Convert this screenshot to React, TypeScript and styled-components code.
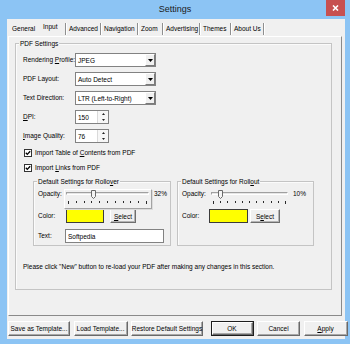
import React from "react";
import styled, { createGlobalStyle, css } from "styled-components";

const GlobalStyle = createGlobalStyle`
  html, body { margin: 0; padding: 0; background: #8cc3f2; }
  body { font-family: "Liberation Sans", Arial, sans-serif; color: #000; }
  * { box-sizing: border-box; }
`;

const Window = styled.div`
  width: 350px;
  height: 344px;
  background: #8cc4f4;
  display: flex;
  flex-direction: column;
  overflow: hidden;
`;

const TitleBar = styled.div`
  flex: none;
  height: 19px;
  display: grid;
  grid-template-columns: 1fr auto 1fr;
  align-items: start;
`;

const Title = styled.div`
  grid-column: 2;
  margin-top: 5px;
  font-size: 9px;
  line-height: 9px;
  color: #1b1b1b;
`;

const CloseButton = styled.div`
  grid-column: 3;
  justify-self: end;
  margin-right: 5px;
  width: 19px;
  height: 16px;
  background: #c75050;
  display: flex;
  align-items: center;
  justify-content: center;
`;

const Client = styled.div`
  flex: 1;
  margin: 0 5px 5px 7px;
  background: #f0f0f0;
  display: flex;
  flex-direction: column;
`;

const TabStrip = styled.div`
  flex: none;
  height: 17px;
  display: flex;
  align-items: flex-end;
  padding: 0 0 1px 2px;
`;

const Tab = styled.div<{ $w: number; $sep?: boolean; $active?: boolean }>`
  width: ${(p) => p.$w}px;
  height: 12px;
  padding-left: 3px;
  font-size: 6.5px;
  line-height: 12px;
  white-space: nowrap;
  ${(p) =>
    p.$sep &&
    css`
      border-right: 1px solid #8f8f8f;
      box-shadow: 1px 0 0 #ffffff;
    `}
  ${(p) =>
    p.$active &&
    css`
      line-height: 8px;
      padding-bottom: 4px;
    `}
`;

const TabPanel = styled.div`
  flex: none;
  margin-left: 1px;
  width: 334px;
  height: 280px;
  border: 1px solid;
  border-color: #ffffff #8a8a8a #8a8a8a #ffffff;
  padding: 6px 0 0 6px;
`;

const GroupBox = styled.div<{ $w: number; $h?: number }>`
  position: relative;
  width: ${(p) => p.$w}px;
  ${(p) => p.$h && css`height: ${p.$h}px;`}
  border: 1px solid #c4c4c4;
  box-shadow: inset 1px 1px 0 #fbfbfb;
`;

const GroupLabel = styled.span`
  position: absolute;
  top: -4px;
  left: 3px;
  padding: 0 1px;
  background: #f0f0f0;
  font-size: 6.5px;
  line-height: 8px;
  white-space: nowrap;
`;

const PdfBody = styled.div`
  display: flex;
  flex-direction: column;
  padding: 9px 0 0 7px;
`;

const FieldRow = styled.div`
  display: flex;
  align-items: center;
  height: 14px;
  & + & {
    margin-top: 5px;
  }
`;

const Text = styled.span<{ $w?: number }>`
  font-size: 6.5px;
  line-height: 8px;
  white-space: nowrap;
  ${(p) => p.$w !== undefined && css`width: ${p.$w}px; flex: none;`}
`;

const Key = styled.span`
  text-decoration: underline;
  text-underline-offset: 1px;
`;

const Field = styled.div<{ $w: number }>`
  width: ${(p) => p.$w}px;
  height: 14px;
  flex: none;
  background: #ffffff;
  border: 1px solid #828282;
  display: flex;
  align-items: center;
  padding-left: 2px;
  font-size: 6.5px;
`;

const DropButton = styled.div`
  margin-left: auto;
  width: 10px;
  height: 12px;
  background: #f0f0f0;
  border: 1px solid;
  border-color: #ffffff #7a7a7a #7a7a7a #ffffff;
  display: flex;
  align-items: center;
  justify-content: center;
`;

const SpinButtons = styled.div`
  margin-left: auto;
  width: 11px;
  height: 12px;
  display: flex;
  flex-direction: column;
  border-left: 1px solid #dadada;
`;

const SpinHalf = styled.div`
  flex: 1;
  display: flex;
  align-items: center;
  justify-content: center;
  background: #f7f7f7;
`;

const CheckRow = styled.div<{ $mt: number }>`
  display: flex;
  align-items: center;
  height: 10px;
  margin-top: ${(p) => p.$mt}px;
  padding-left: 1px;
  gap: 3px;
`;

const CheckBox = styled.div`
  width: 8px;
  height: 8px;
  flex: none;
  background: #ffffff;
  border: 1px solid #333333;
  display: flex;
  align-items: center;
  justify-content: center;
`;

const SubGroups = styled.div`
  display: flex;
  gap: 6px;
  margin: 8px 0 0 10px;
`;

const SubBody = styled.div`
  display: flex;
  flex-direction: column;
  padding: 7px 0 2px 4px;
`;

const SliderRow = styled.div`
  display: flex;
  align-items: flex-start;
  height: 20px;
`;

const SliderLabel = styled(Text)`
  padding-top: 1px;
`;

const SliderValue = styled(Text)`
  margin-left: 2px;
  padding-top: 1px;
`;

const Slider = styled.div<{ $w: number; $framed?: boolean }>`
  position: relative;
  width: ${(p) => p.$w}px;
  height: 20px;
  flex: none;
  border: 1px solid transparent;
  ${(p) =>
    p.$framed &&
    css`
      border-color: #ffffff #a3a3a3 #a3a3a3 #ffffff;
      box-shadow: 1px 1px 0 #dcdcdc;
    `}
`;

const Track = styled.div`
  margin: 2px 2px 0 1px;
  height: 3px;
  border: 1px solid;
  border-color: #a0a0a0 #ffffff #ffffff #a0a0a0;
  background: #e6e6e6;
`;

const Thumb = styled.svg`
  position: absolute;
  top: 0px;
`;

const Ticks = styled.div`
  display: flex;
  justify-content: space-between;
  align-items: flex-start;
  margin-top: 6px;
  padding: 0 4px 0 3px;
`;

const Tick = styled.div<{ $long?: boolean }>`
  width: 1px;
  height: ${(p) => (p.$long ? 3 : 2)}px;
  background: #2a2a2a;
`;

const ColorRow = styled.div`
  display: flex;
  align-items: center;
  height: 14px;
`;

const Swatch = styled.div<{ $w: number }>`
  width: ${(p) => p.$w}px;
  height: 14px;
  flex: none;
  background: #ffff00;
  border: 1px solid #3c3c3c;
`;

const SmallButton = styled.div<{ $w: number; $ml: number }>`
  width: ${(p) => p.$w}px;
  margin-left: ${(p) => p.$ml}px;
  height: 14px;
  flex: none;
  background: #f0f0f0;
  border: 1px solid;
  border-color: #ffffff #6e6e6e #6e6e6e #ffffff;
  box-shadow: inset -1px -1px 0 #b4b4b4;
  display: flex;
  align-items: center;
  justify-content: center;
  font-size: 6.5px;
`;

const TextRow = styled.div`
  display: flex;
  align-items: center;
  height: 14px;
  margin-top: 6px;
`;

const Note = styled(Text)`
  margin-top: 17px;
`;

const ButtonBar = styled.div`
  flex: none;
  display: flex;
  margin: 5px 0 0 1px;
`;

const ButtonGroup = styled.div<{ $ml?: number }>`
  display: flex;
  gap: 3.5px;
  margin-left: ${(p) => p.$ml ?? 0}px;
`;

const Button = styled.div<{ $w: number; $default?: boolean }>`
  width: ${(p) => p.$w}px;
  height: 15px;
  background: #f0f0f0;
  border: 1px solid;
  border-color: #ffffff #696969 #696969 #ffffff;
  box-shadow: inset -1px -1px 0 #a8a8a8;
  display: flex;
  align-items: center;
  justify-content: center;
  font-size: 6.5px;
  white-space: nowrap;
  ${(p) =>
    p.$default &&
    css`
      outline: 1px solid #1e1e1e;
      outline-offset: -1px;
      border-width: 2px;
      box-shadow: inset -1px -1px 0 #a8a8a8;
    `}
`;

const DownArrow = () => (
  <svg width="5" height="3" viewBox="0 0 5 3">
    <polygon points="0,0 5,0 2.5,3" fill="#000" />
  </svg>
);

const SpinArrow = ({ up }: { up?: boolean }) => (
  <svg width="3" height="2" viewBox="0 0 3 2">
    <polygon points={up ? "0,2 3,2 1.5,0" : "0,0 3,0 1.5,2"} fill="#222" />
  </svg>
);

const Check = () => (
  <svg width="6" height="6" viewBox="0 0 6 6">
    <polyline points="0.8,2.8 2.3,4.4 5.2,1.2" fill="none" stroke="#000" strokeWidth="1.3" />
  </svg>
);

function Combo({ value }: { value: string }) {
  return (
    <Field $w={81}>
      {value}
      <DropButton>
        <DownArrow />
      </DropButton>
    </Field>
  );
}

function Spin({ value }: { value: string }) {
  return (
    <Field $w={34}>
      {value}
      <SpinButtons>
        <SpinHalf>
          <SpinArrow up />
        </SpinHalf>
        <SpinHalf>
          <SpinArrow />
        </SpinHalf>
      </SpinButtons>
    </Field>
  );
}

function OpacitySlider({ w, value, framed }: { w: number; value: number; framed?: boolean }) {
  const trackStart = 1;
  const trackLen = w - 2 - 3;
  const left = trackStart + (value / 100) * (trackLen - 5);
  return (
    <Slider $w={w} $framed={framed}>
      <Track />
      <Thumb width="5" height="9" viewBox="0 0 5 9" style={{ left }}>
        <polygon points="0.5,0.5 4.5,0.5 4.5,6.5 2.5,8.5 0.5,6.5" fill="#f4f4f4" stroke="#6a6a6a" strokeWidth="1" />
      </Thumb>
      <Ticks>
        {Array.from({ length: 11 }, (_, i) => (
          <Tick key={i} $long={i === 0 || i === 10} />
        ))}
      </Ticks>
    </Slider>
  );
}

const tabs: { label: string; w: number }[] = [
  { label: "General", w: 31 },
  { label: "Input", w: 26 },
  { label: "Advanced", w: 35 },
  { label: "Navigation", w: 37 },
  { label: "Zoom", w: 25 },
  { label: "Advertising", w: 37 },
  { label: "Themes", w: 31 },
  { label: "About Us", w: 33 },
];

export default function App() {
  return (
    <>
      <GlobalStyle />
      <Window>
        <TitleBar>
          <Title>Settings</Title>
          <CloseButton>
            <svg width="7" height="6" viewBox="0 0 7 6">
              <path d="M1 0.5 L6 5.5 M6 0.5 L1 5.5" stroke="#fff" strokeWidth="1.6" />
            </svg>
          </CloseButton>
        </TitleBar>
        <Client>
          <TabStrip>
            {tabs.map((t, i) => (
              <Tab key={t.label} $w={t.w} $sep={i > 0} $active={i === 1}>
                {t.label}
              </Tab>
            ))}
          </TabStrip>
          <TabPanel>
            <GroupBox $w={317} $h={247}>
              <GroupLabel>PDF Settings</GroupLabel>
              <PdfBody>
                <FieldRow>
                  <Text $w={52}>
                    Rendering <Key>P</Key>rofile:
                  </Text>
                  <Combo value="JPEG" />
                </FieldRow>
                <FieldRow>
                  <Text $w={52}>PDF Layout:</Text>
                  <Combo value="Auto Detect" />
                </FieldRow>
                <FieldRow>
                  <Text $w={52}>Text Direction:</Text>
                  <Combo value="LTR (Left-to-Right)" />
                </FieldRow>
                <FieldRow>
                  <Text $w={52}>
                    <Key>D</Key>PI:
                  </Text>
                  <Spin value="150" />
                </FieldRow>
                <FieldRow>
                  <Text $w={52}>
                    <Key>I</Key>mage Quality:
                  </Text>
                  <Spin value="76" />
                </FieldRow>
                <CheckRow $mt={5}>
                  <CheckBox>
                    <Check />
                  </CheckBox>
                  <Text>
                    Import Table of <Key>C</Key>ontents from PDF
                  </Text>
                </CheckRow>
                <CheckRow $mt={5}>
                  <CheckBox>
                    <Check />
                  </CheckBox>
                  <Text>
                    Import <Key>L</Key>inks from PDF
                  </Text>
                </CheckRow>
                <SubGroups>
                  <GroupBox $w={138}>
                    <GroupLabel>
                      Default Settings for Rollo<Key>v</Key>er
                    </GroupLabel>
                    <SubBody>
                      <SliderRow>
                        <SliderLabel $w={26}>Opacity:</SliderLabel>
                        <OpacitySlider w={88} value={32} framed />
                        <SliderValue>32%</SliderValue>
                      </SliderRow>
                      <ColorRow>
                        <Text $w={28}>Color:</Text>
                        <Swatch $w={38} />
                        <SmallButton $w={26} $ml={6}>
                          <span>
                            <Key>S</Key>elect
                          </span>
                        </SmallButton>
                      </ColorRow>
                      <TextRow>
                        <Text $w={27}>Text:</Text>
                        <Field $w={99}>Softpedia</Field>
                      </TextRow>
                    </SubBody>
                  </GroupBox>
                  <GroupBox $w={137}>
                    <GroupLabel>
                      Default Settings for Roll<Key>o</Key>ut
                    </GroupLabel>
                    <SubBody>
                      <SliderRow>
                        <SliderLabel $w={27}>Opacity:</SliderLabel>
                        <OpacitySlider w={82} value={10} />
                        <SliderValue>10%</SliderValue>
                      </SliderRow>
                      <ColorRow>
                        <Text $w={27}>Color:</Text>
                        <Swatch $w={39} />
                        <SmallButton $w={30} $ml={2}>
                          <span>
                            S<Key>e</Key>lect
                          </span>
                        </SmallButton>
                      </ColorRow>
                    </SubBody>
                  </GroupBox>
                </SubGroups>
                <Note>Please click "New" button to re-load your PDF after making any changes in this section.</Note>
              </PdfBody>
            </GroupBox>
          </TabPanel>
          <ButtonBar>
            <ButtonGroup>
              <Button $w={62}>Save as Template...</Button>
              <Button $w={54}>Load Template...</Button>
              <Button $w={72}>Restore Default Settings</Button>
            </ButtonGroup>
            <ButtonGroup $ml={7.5}>
              <Button $w={43} $default>
                OK
              </Button>
              <Button $w={43}>Cancel</Button>
              <Button $w={44}>
                <span>
                  <Key>A</Key>pply
                </span>
              </Button>
            </ButtonGroup>
          </ButtonBar>
        </Client>
      </Window>
    </>
  );
}
